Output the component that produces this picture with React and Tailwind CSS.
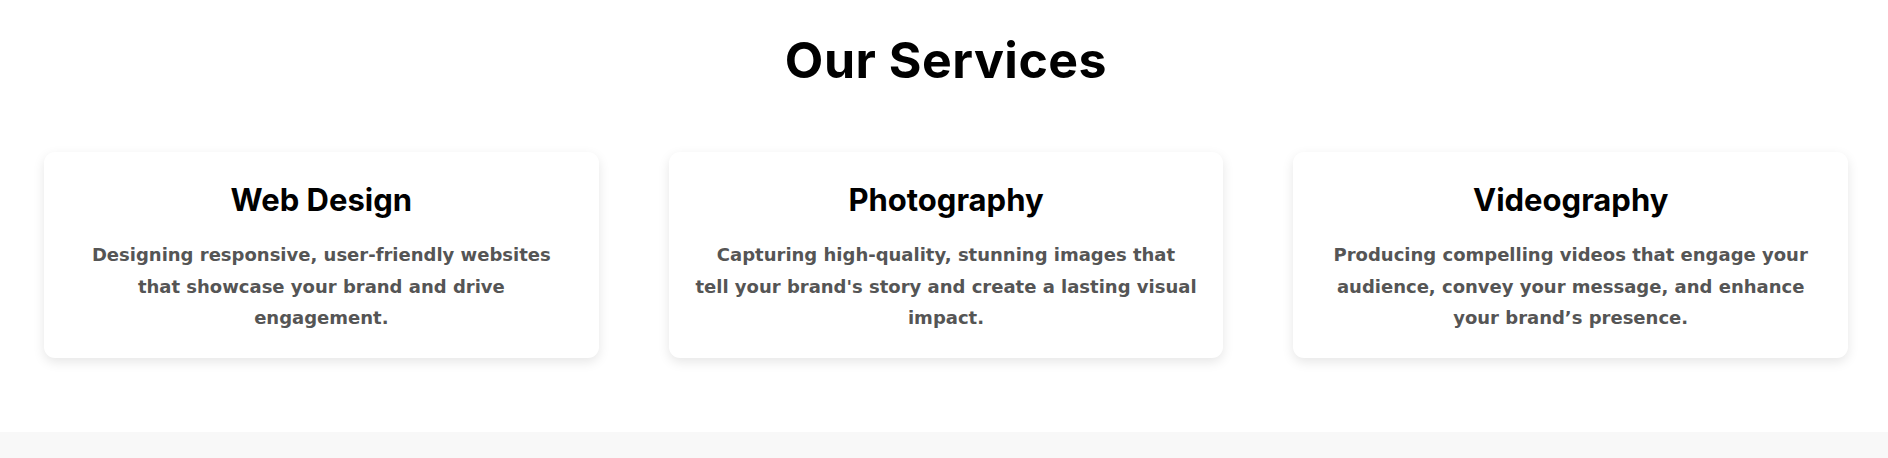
import React from 'react';

const services = [
  {
    title: 'Web Design',
    text: 'Designing responsive, user-friendly websites that showcase your brand and drive engagement.',
  },
  {
    title: 'Photography',
    text: "Capturing high-quality, stunning images that tell\u00a0your brand's story and create a lasting visual impact.",
  },
  {
    title: 'Videography',
    text: 'Producing compelling videos that engage your audience, convey your message, and enhance your brand’s presence.',
  },
];

function ServiceCard({ title, text }) {
  return (
    <div className="bg-white rounded-[11px] shadow-[0_4px_12px_rgba(0,0,0,0.1)] px-[26px] pt-[26px] pb-[24px] text-center">
      <h3 className="font-['Inter',sans-serif] text-[31px] font-bold text-black leading-[44px]">{title}</h3>
      <p className="mt-[17px] font-['DejaVu_Sans',sans-serif] text-[18px] font-bold text-[#555555] leading-[31.5px]">
        {text}
      </p>
    </div>
  );
}

export default function App() {
  return (
    <div className="min-h-[458px] bg-white">
      <section className="pt-[26px] pb-[74px] pl-[44px] pr-[40px]">
        <h2 className="text-center font-['Inter',sans-serif] text-[50px] tracking-[0.01em] font-bold text-black leading-[68px]">
          Our Services
        </h2>
        <div className="mt-[58px] grid grid-cols-3 gap-[70px]">
          {services.map((s) => (
            <ServiceCard key={s.title} {...s} />
          ))}
        </div>
      </section>
      <div className="h-[40px] bg-[#f8f8f8]" />
    </div>
  );
}
